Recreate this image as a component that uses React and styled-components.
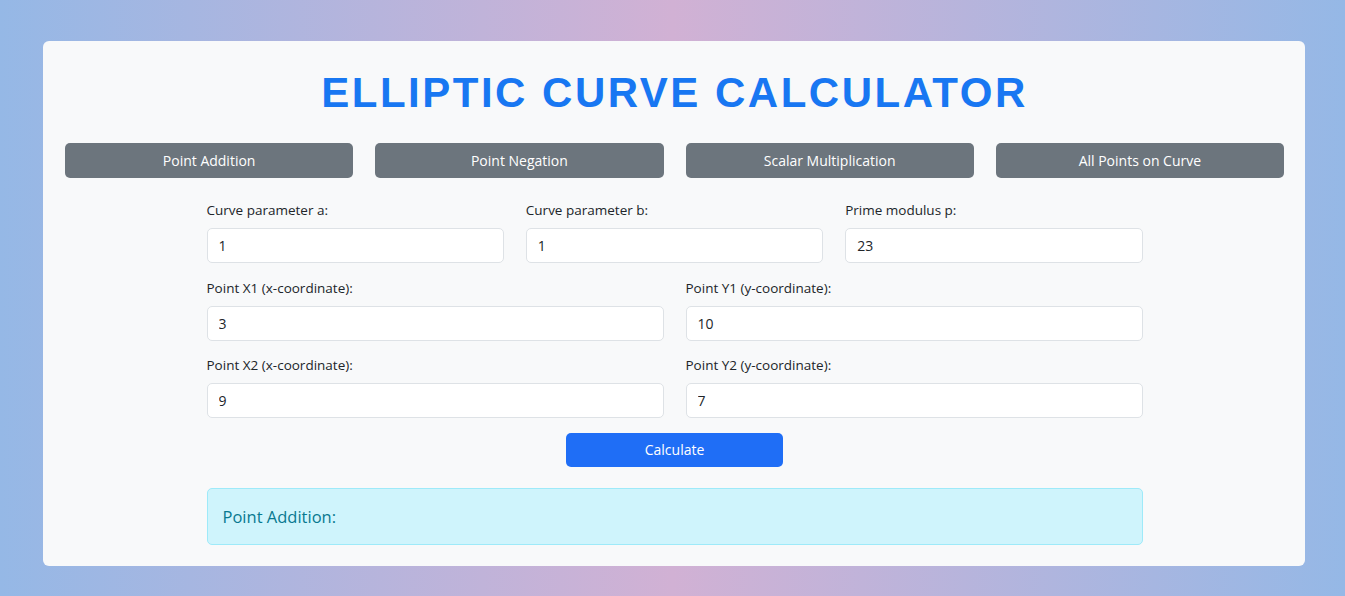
import styled, { createGlobalStyle } from "styled-components";

const GlobalStyle = createGlobalStyle`
    html, body {
        margin: 0;
        padding: 0;
    }
    body {
        font-family: "Open Sans", "Noto Sans", sans-serif;
        background: linear-gradient(90deg, #95b8e6 0%, #d1b1d4 50%, #95b8e6 100%);
        min-height: 596px;
    }
`;

const Page = styled.div`
    padding: 41px 40px 30px 43px;
`;

const Card = styled.div`
    background-color: #f8f9fa;
    border-radius: 6px;
    padding: 25px 21px 21px 22px;
    box-sizing: border-box;
`;

const Title = styled.h1`
    margin: 0 0 24px 0;
    text-align: center;
    font-family: "Liberation Sans", Arial, sans-serif;
    font-weight: 700;
    font-size: 42px;
    line-height: 53px;
    letter-spacing: 2.5px;
    color: #1877f2;
`;

const Tabs = styled.div`
    display: grid;
    grid-template-columns: repeat(4, 1fr);
    gap: 22px;
    margin-bottom: 22px;
`;

const TabButton = styled.button`
    height: 35px;
    border: none;
    border-radius: 5px;
    background-color: #6c757d;
    color: #ffffff;
    font-family: "Open Sans", "Noto Sans", sans-serif;
    font-size: 14px;
    cursor: pointer;
`;

const Form = styled.div`
    width: 936px;
    margin: 0 auto;
    display: flex;
    flex-direction: column;
    gap: 14.5px;
`;

const Row = styled.div`
    display: grid;
    grid-template-columns: repeat(${(p) => p.$cols}, 1fr);
    gap: 22px;
`;

const Field = styled.div`
    display: flex;
    flex-direction: column;
`;

const Label = styled.label`
    font-size: 13.5px;
    line-height: 20px;
    color: #212529;
    margin-bottom: 8px;
`;

const Input = styled.input`
    height: 35px;
    box-sizing: border-box;
    border: 1px solid #dee2e6;
    border-radius: 5px;
    background: #ffffff;
    padding: 0 11px;
    font-family: "Open Sans", "Noto Sans", sans-serif;
    font-size: 14px;
    color: #212529;
`;

const CalcButton = styled.button`
    align-self: center;
    width: 217px;
    height: 34px;
    border: none;
    border-radius: 5px;
    background-color: #1f6ef6;
    color: #ffffff;
    font-family: "Open Sans", "Noto Sans", sans-serif;
    font-size: 14px;
    cursor: pointer;
`;

const Result = styled.div`
    margin-top: 7px;
    height: 57px;
    box-sizing: border-box;
    border: 1px solid #9eeaf9;
    border-radius: 5px;
    background-color: #cff4fc;
    color: #087990;
    font-size: 16.5px;
    display: flex;
    align-items: center;
    padding: 0 15px;
`;

const tabs = ["Point Addition", "Point Negation", "Scalar Multiplication", "All Points on Curve"];

const App = () => {
    return (
        <>
            <GlobalStyle />
            <Page>
                <Card>
                    <Title>ELLIPTIC CURVE CALCULATOR</Title>
                    <Tabs>
                        {tabs.map((t) => (
                            <TabButton key={t}>{t}</TabButton>
                        ))}
                    </Tabs>
                    <Form>
                        <Row $cols={3}>
                            <Field>
                                <Label>Curve parameter a:</Label>
                                <Input defaultValue="1" />
                            </Field>
                            <Field>
                                <Label>Curve parameter b:</Label>
                                <Input defaultValue="1" />
                            </Field>
                            <Field>
                                <Label>Prime modulus p:</Label>
                                <Input defaultValue="23" />
                            </Field>
                        </Row>
                        <Row $cols={2}>
                            <Field>
                                <Label>Point X1 (x-coordinate):</Label>
                                <Input defaultValue="3" />
                            </Field>
                            <Field>
                                <Label>Point Y1 (y-coordinate):</Label>
                                <Input defaultValue="10" />
                            </Field>
                        </Row>
                        <Row $cols={2}>
                            <Field>
                                <Label>Point X2 (x-coordinate):</Label>
                                <Input defaultValue="9" />
                            </Field>
                            <Field>
                                <Label>Point Y2 (y-coordinate):</Label>
                                <Input defaultValue="7" />
                            </Field>
                        </Row>
                        <CalcButton>Calculate</CalcButton>
                        <Result>Point Addition:</Result>
                    </Form>
                </Card>
            </Page>
        </>
    );
};

export default App;
